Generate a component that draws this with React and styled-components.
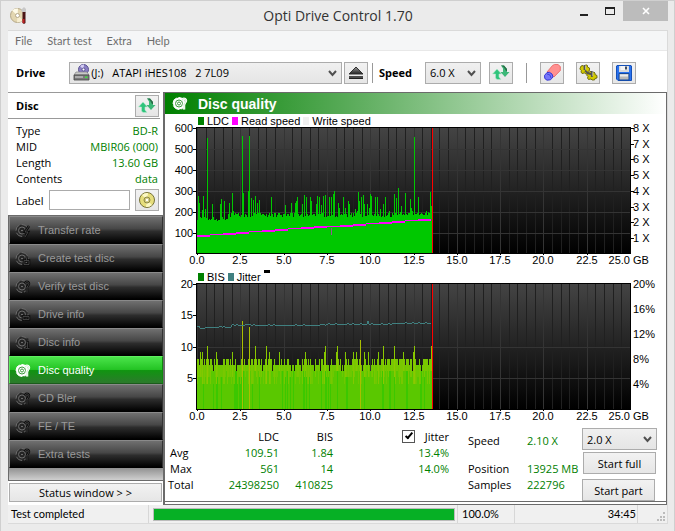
import { useState } from "react";
import styled, { createGlobalStyle } from "styled-components";

const GlobalStyle = createGlobalStyle`
	*, *::before, *::after {
		box-sizing: border-box;
	}

	body {
		margin: 0;
		font-family: "Open Sans", "Noto Sans", sans-serif;
		font-size: 11px;
		color: #000;
	}

	button, input, select {
		font: inherit;
		color: inherit;
	}
`;

const Window = styled.div`
	min-height: 100vh;
	display: flex;
	flex-direction: column;
	padding: 0 6px 7px 7px;
	background: #ebebeb;
	border: 1px solid #cfcfcf;
`;

/* title bar */
const TitleBar = styled.header`
	display: grid;
	grid-template-columns: 1fr auto 1fr;
	height: 29px;

	.appIcon {
		margin: 5px 0 0 2px;
	}

	h1 {
		margin: 0;
		font-size: 14px;
		line-height: 29px;
		font-weight: 400;
		color: #333;
	}
`;

const WindowButtons = styled.div`
	display: flex;
	justify-content: flex-end;
	align-items: flex-start;
`;

const WindowButton = styled.button`
	width: ${(props) => (props.$close ? "45px" : "26px")};
	height: 20px;
	padding: 0;
	border: none;
	background: ${(props) => (props.$close ? "#bcbcbc" : "transparent")};

	svg {
		display: block;
		margin: 0 auto;
	}
`;

const Client = styled.div`
	flex: 1;
	display: flex;
	flex-direction: column;
	background: #fff;
	border: 1px solid #dadada;
	border-width: 1px 1px 1px 0;
`;

const MenuBar = styled.nav`
	display: flex;
	gap: 15px;
	height: 20px;
	padding-left: 7px;
	background: #f5f6f7;
	border-bottom: 1px solid #e8e8e8;

	button {
		padding: 0;
		border: none;
		background: none;
		font-family: Lato, "Open Sans", sans-serif;
		font-size: 11px;
		line-height: 18px;
		color: #6d6d6d;
	}
`;

/* toolbar */
const Toolbar = styled.div`
	display: flex;
	align-items: center;
	height: 41px;
	padding: 2px 31px 0 8px;

	label {
		font-weight: 700;
	}
`;

const Divider = styled.span`
	width: 1px;
	height: 20px;
	margin: ${(props) => props.$margin};
	background: #999;
`;

const ToolButton = styled.button`
	display: flex;
	align-items: center;
	justify-content: center;
	flex: none;
	width: 24px;
	height: 22px;
	margin-left: ${(props) => props.$gap || "0"};
	padding: 0;
	background: linear-gradient(#f2f2f2, #e6e6e6);
	border: 1px solid #acacac;
`;

const SelectBox = styled.div`
	position: relative;
	display: flex;
	align-items: center;
	width: ${(props) => props.$width || "auto"};
	flex: ${(props) => (props.$grow ? "1" : "none")};
	height: 22px;
	margin-left: ${(props) => props.$gap || "0"};
	padding-left: 3px;
	background: linear-gradient(#f0f0f0, #e5e5e5);
	border: 1px solid #acacac;

	select {
		appearance: none;
		flex: 1;
		min-width: 0;
		height: 20px;
		padding: 0 16px 0 1px;
		border: none;
		background: none;
		white-space: pre;
	}

	.chevron {
		position: absolute;
		right: 4px;
		top: 7px;
		pointer-events: none;
	}
`;

/* two columns under the toolbar */
const Main = styled.div`
	flex: 1;
	display: grid;
	grid-template-columns: 155px 1fr;
`;

const Sidebar = styled.aside`
	display: flex;
	flex-direction: column;
`;

const DiscHeader = styled.div`
	display: flex;
	align-items: center;
	justify-content: space-between;
	height: 27px;
	margin-right: 3px;
	padding: 0 1px 0 8px;
	border-top: 1px solid #999;
	border-bottom: 1px solid #999;

	h2 {
		margin: 0;
		font-size: 11px;
	}
`;

const DiscInfo = styled.dl`
	display: grid;
	grid-template-columns: auto 1fr;
	margin: 4px 5px 0 8px;
	line-height: 16px;

	dt,
	dd {
		margin: 0;
	}

	dd {
		text-align: right;
		color: #008000;
	}
`;

const LabelRow = styled.div`
	display: flex;
	align-items: center;
	height: 28px;
	padding: 0 4px 2px 8px;

	label {
		width: 33px;
	}

	input {
		flex: 1;
		min-width: 0;
		height: 20px;
		border: 1px solid #ababab;
		background: #fff;
	}
`;

const NavList = styled.nav`
	flex: 1;
	background: linear-gradient(#8c8c8c, #cfcfcf) bottom / 100% 13px no-repeat;
	border: 1px solid #6b6b6b;
	border-right: none;
`;

const NavButton = styled.button`
	display: flex;
	align-items: center;
	gap: 7px;
	width: 100%;
	height: 28px;
	padding: 0 0 0 5px;
	font-family: "Liberation Sans", Arial, sans-serif;
	font-size: 11px;
	color: ${(props) => (props.$active ? "#fff" : "#999")};
	background: ${(props) =>
		props.$active
			? "linear-gradient(#4be44b, #24c424 48%, #119411 52%, #2c7a2c)"
			: "linear-gradient(#707070, #474747 45%, #2d2d2d 55%, #000)"};
	border: 1px solid ${(props) => (props.$active ? "#5fef5f" : "#8a8a8a")};
	border-bottom-color: ${(props) => (props.$active ? "#1b5c1b" : "#000")};
	border-right-color: ${(props) => (props.$active ? "#0d8a0d" : "#333")};
`;

const PushButton = styled.button`
	height: ${(props) => (props.$low ? "19px" : "22px")};
	margin: ${(props) => props.$margin || "0"};
	padding: 0;
	background: linear-gradient(#f2f2f2, #e6e6e6);
	border: 1px solid #acacac;
	font-size: 11px;
	line-height: 17px;
`;

/* result panel */
const Panel = styled.section`
	display: flex;
	flex-direction: column;
	border: 1px solid #6b6b6b;
	border-left-width: 2px;
	padding-bottom: 2px;
`;

const PanelTitle = styled.div`
	display: flex;
	align-items: center;
	gap: 10px;
	height: 21px;
	padding-left: 7px;
	background: linear-gradient(to right, #008000, #55a955 35%, #fff);

	h2 {
		margin: 0;
		font-family: "Liberation Sans", Arial, sans-serif;
		font-size: 14px;
		color: #fff;
	}
`;

const Legend = styled.div`
	display: flex;
	align-items: center;
	gap: 3px;
	height: 13px;
	padding-left: 33px;
	font-family: "Liberation Sans", Arial, sans-serif;
	font-size: 11px;

	span {
		display: flex;
		align-items: center;
		gap: 3px;
	}
`;

const Swatch = styled.i`
	width: 6px;
	height: 8px;
	background: ${(props) => props.$color};
`;

const Mark = styled.i`
	align-self: flex-start;
	width: 6px;
	height: 3px;
	background: #000;
`;

const ChartSvg = styled.svg`
	display: block;
	width: 100%;
	overflow: visible;
	font-family: "Liberation Sans", Arial, sans-serif;
	font-size: 11px;
`;

const Results = styled.div`
	flex: 1;
	display: flex;
	padding: 5px 9px 0 3px;
	border-bottom: 1px solid #6b6b6b;
`;

const ResultTable = styled.table`
	width: 281px;
	border-collapse: collapse;
	table-layout: fixed;
	align-self: flex-start;

	th,
	td {
		height: 16px;
		padding: 0;
		font-weight: 400;
		text-align: right;
		line-height: 16px;
	}

	thead th {
		height: 17px;
	}

	tbody th {
		text-align: left;
		padding-left: 2px;
	}

	tbody tr:last-child th {
		padding-left: 0;
	}

	td {
		color: #008000;
	}
`;

const CheckLabel = styled.label`
	display: flex;
	align-items: center;
	justify-content: flex-end;
	gap: 10px;

	input {
		appearance: none;
		width: 13px;
		height: 13px;
		margin: 0;
		border: 1px solid #555;
		background: #fff;
		color: #000;
	}

	input:checked::before {
		content: "";
		display: block;
		width: 4px;
		height: 8px;
		margin: 0 0 0 4px;
		border: solid #000;
		border-width: 0 2px 2px 0;
		transform: rotate(40deg);
	}
`;

const Readings = styled.dl`
	flex: 1;
	display: grid;
	grid-template-columns: 59px 1fr;
	grid-template-rows: 28px 16px 16px;
	align-content: start;
	margin: 5px 0 0 19px;
	line-height: 16px;
	white-space: nowrap;

	dt,
	dd {
		margin: 0;
	}

	dd {
		color: #008000;
	}
`;

const Actions = styled.div`
	display: flex;
	flex-direction: column;
	width: 75px;
`;

/* status bar */
const StatusBar = styled.footer`
	display: flex;
	align-items: center;
	height: 18px;
	background: #f0f0f0;
	font-family: Lato, "Open Sans", sans-serif;
	font-size: 11px;

	span {
		line-height: 18px;
		border-right: 1px solid #d7d7d7;
	}

	.message {
		width: 141px;
		padding-left: 3px;
	}

	progress {
		appearance: none;
		flex: 1;
		min-width: 0;
		height: 13px;
		margin: 0 2px 0 4px;
		border: 1px solid #bcbcbc;
	}

	progress::-webkit-progress-bar {
		background: #e6e6e6;
	}

	progress::-webkit-progress-value {
		background: #06b025;
	}

	.percent {
		width: 58px;
		padding-left: 4px;
		border-left: 1px solid #d7d7d7;
	}

	.time {
		width: 123px;
		padding-right: 1px;
		text-align: right;
	}

	svg {
		margin: 5px 1px 0 18px;
	}
`;

/* ---------- icons ---------- */

function Chevron() {
	return (
		<svg className="chevron" width="9" height="7" viewBox="0 0 9 7">
			<path d="M1 1l3.5 4L8 1" fill="none" stroke="#505050" strokeWidth="2" />
		</svg>
	);
}

function RefreshIcon() {
	return (
		<svg width="18" height="16" viewBox="0 0 18 16">
			<path
				d="M5 4l4.500 5H7v3l2 2.500H5L3.500 13V9H.5z"
				fill="#2fc47c"
				stroke="#b9e8cf"
				strokeWidth=".6"
			/>
			<path d="M13 12l4.500-5H15V4l-3-3.500H9l2 3V7H8.500z" fill="#3db878" />
			<path d="M9 .5h3L15 4v2h-1L12 2.500z" fill="#2b6d48" />
		</svg>
	);
}

function EjectIcon() {
	return (
		<svg width="16" height="14" viewBox="0 0 16 14">
			<defs>
				<linearGradient id="eject" x2="0" y2="1">
					<stop offset="0" stopColor="#999" />
					<stop offset="1" stopColor="#222" />
				</linearGradient>
			</defs>
			<path d="M8 1l7 7H1z" fill="url(#eject)" stroke="#333" />
			<path d="M1 10h14v3H1z" fill="#222" />
			<path d="M1 11h14" stroke="#777" />
		</svg>
	);
}

function EraserIcon() {
	return (
		<svg width="18" height="17" viewBox="0 0 18 17">
			<path
				d="M4 8L9.500 1.500l2-1H15l2.300 2v4L11 13z"
				fill="#ff9090"
				stroke="#ea6060"
				strokeWidth=".8"
			/>
			<path
				d="M4 8.500L1.500 11.500l.3 3L4 16.200l3.500-.4L10 13 9 10 6.500 8.300z"
				fill="#7676fa"
				stroke="#2a2ad0"
				strokeWidth=".9"
			/>
			<path d="M4 10l3 1 1 3" fill="none" stroke="#3a3ad8" strokeWidth=".8" />
		</svg>
	);
}

function GearsIcon() {
	return (
		<svg width="19" height="17" viewBox="0 0 19 17">
			<g fill="#d2ca00" stroke="#5c5800" strokeWidth=".8">
				<path d="M2 2l2-.5 1 1L7 .8l1.500.7V3l2 1v2.500l-1.500 1L9 9.500l-2 .5-1.500-1L3 9.500 2 8l.3-1.500L.8 5z" />
				<path d="M10 8l2-.5 1 1.200L15 8l1 1v1.500l2 1V14l-2 .5-.5 1.500H13l-1-1-2.500.5-1-1.500.5-1.500L7.500 11z" />
			</g>
			<path
				d="M5.500 1v5M12.800 7v6M6 6.500l3 3 3 .5"
				fill="none"
				stroke="#555"
				strokeWidth="1.800"
			/>
			<path d="M6.500 1.500v4M13.800 8v4" stroke="#bbb" strokeWidth=".8" />
		</svg>
	);
}

function SaveIcon() {
	return (
		<svg width="16" height="16" viewBox="0 0 16 16">
			<path d="M1 .5h14l.5.500v14.500H2L.5 14V1z" fill="#2a72ee" stroke="#1550b8" />
			<path d="M3 1h10v6H3z" fill="#d8dadd" />
			<path d="M3 8.500h10V15H3z" fill="#b8b8b8" stroke="#14489c" />
			<path d="M4 9.500h8v2H4z" fill="#ececec" />
			<path d="M4.500 1h7v4h-7z" fill="#f4f4f4" />
			<path d="M9 1.500h2v3H9z" fill="#3c4b60" />
		</svg>
	);
}

function AppIcon() {
	return (
		<svg className="appIcon" width="17" height="19" viewBox="0 0 17 19">
			<circle cx="7.500" cy="9.500" r="7" fill="#e3d6b0" stroke="#b5a888" />
			<path d="M7.500 9.500L2 4.500A7 7 0 0 1 8 2.500z" fill="#fffbe8" />
			<path d="M7.500 9.500L13 14a7 7 0 0 1-6 2.300z" fill="#f7eed0" />
			<circle cx="7.500" cy="9.500" r="2" fill="#fff" stroke="#b5a888" />
			<path d="M11 4l3-3 2 2v4h-3z" fill="#c8c8c8" />
			<path d="M12.500 6h3v11l-1.500 1-1.500-1z" fill="#4b1515" />
			<path d="M12.500 13h2v4h-2z" fill="#c02020" />
		</svg>
	);
}

function DriveIcon() {
	return (
		<svg width="17" height="17" viewBox="0 0 17 17">
			<circle cx="10.500" cy="5.500" r="5" fill="#8a7fc4" stroke="#5a5290" />
			<path d="M10.500 5.500L7 2a5 5 0 0 1 4-1.500z" fill="#d6cff5" />
			<circle cx="10.500" cy="5.500" r="1.500" fill="#fff" stroke="#5a5290" />
			<path d="M3 8h11l2 3H1z" fill="#c9c9c9" stroke="#777" strokeWidth=".6" />
			<path d="M1 11h15v5H1z" fill="#7b7b7b" stroke="#444" strokeWidth=".8" />
			<path d="M2 13h8" stroke="#ddd" />
			<path d="M12 12.500h2.500v1.500H12z" fill="#3fe03f" />
		</svg>
	);
}

function DiscIcon() {
	return (
		<svg width="18" height="18" viewBox="0 0 18 18">
			<circle cx="9" cy="9" r="7.500" fill="#e6de7c" stroke="#77733a" />
			<path d="M9 9L4 4a7 7 0 0 1 6-2z" fill="#fbf8c4" />
			<path d="M9 9l5 5a7 7 0 0 1-6 2z" fill="#fbf8c4" />
			<circle cx="9" cy="9" r="3" fill="#d3cc80" stroke="#8d8848" />
			<circle cx="9" cy="9" r="1.200" fill="#fff" />
		</svg>
	);
}

const badges = {
	transfer: "M14 3l-4 6h3l-3 5",
	create: "M9 9.500h5v4H9zM11.500 6.500v3",
	verify: "M10 4.500a2 2 0 1 1 3 2l-1 2M12 8v5.500",
	drive: "M8 9.500h6v3H8z",
	info: "M12 3.500v1.500M11 7h1.500v6M10.500 13.500h4",
};

function NavIcon({ badge, active }) {
	const disc = active ? "#fff" : "#6c6c6c";
	const dark = active ? "#3a9a3a" : "#161616";

	return (
		<svg width="16" height="15" viewBox="0 0 16 15">
			<circle cx="7" cy="7.500" r="6" fill={active ? "#fff" : "#282828"} />
			<circle
				cx="7"
				cy="7.500"
				r="6"
				fill="none"
				stroke={disc}
				strokeDasharray="7 2"
			/>
			<circle cx="7" cy="7.500" r="3.500" fill="none" stroke={active ? dark : disc} />
			<circle cx="7" cy="7.500" r="1.500" fill={disc} stroke={dark} />
			<path
				d={badges[badge]}
				fill="none"
				stroke={active ? "#fff" : "#0b0b0b"}
				strokeWidth="2.500"
			/>
			<path
				d={badges[badge]}
				fill="none"
				stroke={active ? "#bfe6bf" : "#555"}
				strokeWidth=".7"
			/>
		</svg>
	);
}

/* ---------- chart data ---------- */

const PLOT_LEFT = 32;
const PLOT_RIGHT = 465;
const PLOT_HEIGHT = 126;
const END = 235; // column where the test stopped
const PER_GB = (PLOT_RIGHT - PLOT_LEFT) / 25;

// column, height
const ldcPeaks = new Map([
	[1, 57], [2, 50], [5, 43], [6, 57], [8, 44], [10, 115], [15, 49], [23, 49],
	[24, 54], [27, 52], [32, 50], [35, 60], [36, 42], [45, 117], [46, 60],
	[51, 62], [52, 117], [54, 55], [56, 53], [58, 57], [60, 50], [62, 53],
	[74, 56], [81, 40], [88, 48], [94, 50], [98, 50], [99, 52], [100, 56],
	[105, 49], [107, 58], [109, 56], [113, 56], [114, 52], [119, 49], [120, 57],
	[122, 56], [124, 48], [126, 57], [128, 58], [132, 56], [134, 56], [136, 59],
	[137, 62], [141, 50], [142, 45], [146, 56], [148, 45], [151, 52], [152, 49],
	[156, 40], [158, 44], [160, 42], [161, 61], [162, 52], [164, 56], [166, 58],
	[167, 49], [170, 49], [172, 45], [173, 59], [174, 57], [178, 56], [180, 56],
	[183, 44], [186, 49], [188, 56], [192, 42], [197, 59], [199, 55], [201, 65],
	[204, 47], [208, 60], [213, 54], [214, 45], [217, 116], [221, 56], [233, 61],
	[234, 47],
]);

const bisPeaks = new Map([
	[10, 10], [45, 14], [52, 13], [58, 10], [69, 10], [128, 10], [140, 10],
	[163, 11], [186, 10], [197, 10], [217, 10], [234, 10],
]);

function noise(n) {
	const v = Math.sin(n * 12.9898 + 4.1) * 43758.5453;
	return v - Math.floor(v);
}

function ldcHeight(i) {
	const base = i < 31 ? 32 : i < 200 ? 36 : 38;
	return ldcPeaks.get(i) || base + Math.floor(noise(i) * 5);
}

function bisValue(i) {
	if (bisPeaks.has(i)) return bisPeaks.get(i);
	const r = noise(i + 90);
	if (r > 0.9) return 9;
	if (r > 0.48) return 8;
	return r < 0.06 ? 6 : 7;
}

function bisColor(value) {
	if (value > 10) return "#aabe00";
	return ["#5ac800", "#6ec800", "#78c800", "#82c800", "#8cc800"][value - 6];
}

const columns = Array.from({ length: END }, (_, i) => i);

const jitterPoints = columns
	.map((i) => {
		let y = i < 3 ? 42 : i < 12 ? 44 : i < 35 ? 43 : i < 130 ? 41 : 40;
		if (i > 195) y = 39;
		if (noise(i + 500) > 0.8) y -= 1;
		if (i === 171) y = 37;
		return `${PLOT_LEFT + i},${y + 1}`;
	})
	.join(" ");

/* ---------- charts ---------- */

function PlotBackground({ id, rows }) {
	return (
		<>
			<defs>
				<linearGradient id={id} x2="0" y2="1">
					<stop offset="0" stopColor="#444" />
					<stop offset="1" stopColor="#000" />
				</linearGradient>
			</defs>
			<rect x="31" y="0" width="435" height="127" fill="#000" />
			<rect x="32" y="1" width="433" height="125" fill={`url(#${id})`} />
			{Array.from({ length: 50 }, (_, i) => (
				<rect
					key={i}
					x={Math.round(PLOT_LEFT + i * 0.5 * PER_GB)}
					y="1"
					width="1"
					height="125"
					fill={i % 5 === 0 ? "#343434" : "#202020"}
				/>
			))}
			{rows.map((y) => (
				<rect key={y} x="32" y={y} width="433" height="1" fill="#343434" />
			))}
		</>
	);
}

function XAxis() {
	return (
		<>
			{[0, 2.5, 5, 7.5, 10, 12.5, 15, 17.5, 20, 22.5].map((gb) => (
				<g key={gb}>
					<rect x={Math.round(PLOT_LEFT + gb * PER_GB)} y="126" width="1" height="2" />
					<text x={Math.round(PLOT_LEFT + gb * PER_GB)} y="137" textAnchor="middle">
						{gb.toFixed(1)}
					</text>
				</g>
			))}
			<text x="465" y="137" textAnchor="end">
				25.0
			</text>
			<text x="468" y="137">
				GB
			</text>
		</>
	);
}

function LdcChart() {
	return (
		<ChartSvg viewBox="0 0 501 143" shapeRendering="crispEdges" role="img" aria-label="LDC">
			<PlotBackground id="ldcBack" rows={[22, 43, 64, 85, 106]} />
			{columns.map((i) => (
				<rect
					key={i}
					x={PLOT_LEFT + i}
					y={PLOT_HEIGHT - ldcHeight(i)}
					width="1"
					height={ldcHeight(i)}
					fill="#00c800"
				/>
			))}
			{/* read speed rises in steps */}
			{Array.from({ length: 18 }, (_, i) => (
				<rect
					key={i}
					x={PLOT_LEFT + i * 13}
					y={Math.round(108 - i * 0.95)}
					width="13"
					height={i % 3 === 1 ? 1 : 2}
					fill="#f0f"
				/>
			))}
			<rect x="166" y="101" width="1" height="7" fill="#f0f" opacity="0.6" />
			<rect x="267" y="1" width="1" height="125" fill="#f00" />
			{[600, 500, 400, 300, 200, 100].map((value, i) => (
				<g key={value}>
					<rect x="28" y={1 + i * 21} width="4" height="1" />
					<text x="28" y={5 + i * 21} textAnchor="end">
						{value}
					</text>
				</g>
			))}
			{[8, 7, 6, 5, 4, 3, 2, 1].map((value, i) => (
				<g key={value}>
					<rect x="466" y={Math.round(1 + i * 15.7)} width="3" height="1" />
					<text x="468" y={Math.round(5 + i * 15.7)}>
						{value} X
					</text>
				</g>
			))}
			<XAxis />
		</ChartSvg>
	);
}

function BisChart() {
	return (
		<ChartSvg viewBox="0 0 501 140" shapeRendering="crispEdges" role="img" aria-label="BIS">
			<PlotBackground id="bisBack" rows={[64, 95]} />
			{columns.map((i) => {
				const value = bisValue(i);
				const height = Math.round(value * 6.3);
				const inner = Math.round((4 + Math.floor(noise(i + 200) * 3)) * 6.3);
				return (
					<g key={i}>
						<rect
							x={PLOT_LEFT + i}
							y={PLOT_HEIGHT - height}
							width="1"
							height={height}
							fill={bisColor(value)}
						/>
						{value < 11 && (
							<rect
								x={PLOT_LEFT + i}
								y={PLOT_HEIGHT - inner}
								width="1"
								height={inner}
								fill={noise(i + 300) > 0.8 ? "#3cc800" : "#5ac800"}
							/>
						)}
					</g>
				);
			})}
			<polyline points={jitterPoints} fill="none" stroke="#408080" />
			<rect x="267" y="1" width="1" height="125" fill="#f00" />
			{[20, 15, 10, 5].map((value, i) => (
				<g key={value}>
					<rect x="28" y={Math.round(1 + i * 31.4)} width="4" height="1" />
					<text x="28" y={Math.round(5 + i * 31.4)} textAnchor="end">
						{value}
					</text>
				</g>
			))}
			{[20, 16, 12, 8, 4].map((value, i) => (
				<text key={value} x="468" y={5 + i * 25}>
					{value}%
				</text>
			))}
			<XAxis />
		</ChartSvg>
	);
}

const tests = [
	{ name: "Transfer rate", badge: "transfer" },
	{ name: "Create test disc", badge: "create" },
	{ name: "Verify test disc", badge: "verify" },
	{ name: "Drive info", badge: "drive" },
	{ name: "Disc info", badge: "info" },
	{ name: "Disc quality", badge: "verify" },
	{ name: "CD Bler", badge: "verify" },
	{ name: "FE / TE", badge: "verify" },
	{ name: "Extra tests", badge: "verify" },
];

function App() {
	const [activeTest, setActiveTest] = useState("Disc quality");
	const [discLabel, setDiscLabel] = useState("");
	const [showJitter, setShowJitter] = useState(true);

	return (
		<>
			<GlobalStyle />
			<Window>
				<TitleBar>
					<AppIcon />
					<h1>Opti Drive Control 1.70</h1>
					<WindowButtons>
						<WindowButton aria-label="Minimize">
							<svg width="9" height="10" viewBox="0 0 9 10">
								<path d="M0 8h8v2H0z" fill="#222" />
							</svg>
						</WindowButton>
						<WindowButton aria-label="Maximize">
							<svg width="10" height="8" viewBox="0 0 10 8">
								<path d="M0 0h10v8H0zM1 2v5h8V2z" fill="#222" fillRule="evenodd" />
							</svg>
						</WindowButton>
						<WindowButton $close aria-label="Close">
							<svg width="8" height="8" viewBox="0 0 8 8">
								<path d="M1 1l6 6M7 1L1 7" stroke="#fff" strokeWidth="1.600" />
							</svg>
						</WindowButton>
					</WindowButtons>
				</TitleBar>

				<Client>
					<MenuBar>
						<button>File</button>
						<button>Start test</button>
						<button>Extra</button>
						<button>Help</button>
					</MenuBar>

					<Toolbar>
						<label htmlFor="drive">Drive</label>
						<SelectBox $grow $gap="24px">
							<DriveIcon />
							<select id="drive">
								<option>{"(J:)\u00a0\u00a0 ATAPI iHES108\u00a0\u00a0 2 7L09"}</option>
							</select>
							<Chevron />
						</SelectBox>
						<ToolButton $gap="2px" aria-label="Eject">
							<EjectIcon />
						</ToolButton>
						<Divider $margin="0 6px 0 4px" />
						<label htmlFor="speed">Speed</label>
						<SelectBox $width="56px" $gap="13px">
							<select id="speed">
								<option>6.0 X</option>
							</select>
							<Chevron />
						</SelectBox>
						<ToolButton $gap="8px" aria-label="Refresh drives">
							<RefreshIcon />
						</ToolButton>
						<Divider $margin="0 1px 0 13px" />
						<ToolButton $gap="12px" aria-label="Erase disc">
							<EraserIcon />
						</ToolButton>
						<ToolButton $gap="12px" aria-label="Options">
							<GearsIcon />
						</ToolButton>
						<ToolButton $gap="12px" aria-label="Save">
							<SaveIcon />
						</ToolButton>
					</Toolbar>

					<Main>
						<Sidebar>
							<DiscHeader>
								<h2>Disc</h2>
								<ToolButton aria-label="Refresh disc">
									<RefreshIcon />
								</ToolButton>
							</DiscHeader>
							<DiscInfo>
								<dt>Type</dt>
								<dd>BD-R</dd>
								<dt>MID</dt>
								<dd>MBIR06 (000)</dd>
								<dt>Length</dt>
								<dd>13.60 GB</dd>
								<dt>Contents</dt>
								<dd>data</dd>
							</DiscInfo>
							<LabelRow>
								<label htmlFor="discLabel">Label</label>
								<input
									type="text"
									id="discLabel"
									value={discLabel}
									onChange={(e) => setDiscLabel(e.target.value)}
								/>
								<ToolButton $gap="5px" aria-label="Read label">
									<DiscIcon />
								</ToolButton>
							</LabelRow>
							<NavList>
								{tests.map((test) => (
									<NavButton
										key={test.name}
										$active={test.name === activeTest}
										onClick={() => setActiveTest(test.name)}
									>
										<NavIcon badge={test.badge} active={test.name === activeTest} />
										{test.name}
									</NavButton>
								))}
							</NavList>
							<PushButton $low $margin="2px 1px 3px">
								{"Status window > >"}
							</PushButton>
						</Sidebar>

						<Panel>
							<PanelTitle>
								<NavIcon badge="verify" active />
								<h2>Disc quality</h2>
							</PanelTitle>
							<Legend>
								<span>
									<Swatch $color="#008000" />
									LDC
								</span>
								<span>
									<Swatch $color="#f0f" />
									Read speed
								</span>
								<span>
									<Swatch $color="#f0f0f0" />
									Write speed
								</span>
							</Legend>
							<LdcChart />
							<Legend>
								<span>
									<Swatch $color="#008000" />
									BIS
								</span>
								<span>
									<Swatch $color="#408080" />
									Jitter
								</span>
								<Mark />
							</Legend>
							<BisChart />

							<Results>
								<ResultTable>
									<colgroup>
										<col width="45" />
										<col width="66" />
										<col width="54" />
										<col width="116" />
									</colgroup>
									<thead>
										<tr>
											<td />
											<th>LDC</th>
											<th>BIS</th>
											<th>
												<CheckLabel>
													<input
														type="checkbox"
														checked={showJitter}
														onChange={(e) => setShowJitter(e.target.checked)}
													/>
													Jitter
												</CheckLabel>
											</th>
										</tr>
									</thead>
									<tbody>
										<tr>
											<th>Avg</th>
											<td>109.51</td>
											<td>1.84</td>
											<td>13.4%</td>
										</tr>
										<tr>
											<th>Max</th>
											<td>561</td>
											<td>14</td>
											<td>14.0%</td>
										</tr>
										<tr>
											<th>Total</th>
											<td>24398250</td>
											<td>410825</td>
											<td />
										</tr>
									</tbody>
								</ResultTable>
								<Readings>
									<dt>Speed</dt>
									<dd>2.10 X</dd>
									<dt>Position</dt>
									<dd>13925 MB</dd>
									<dt>Samples</dt>
									<dd>222796</dd>
								</Readings>
								<Actions>
									<SelectBox>
										<select aria-label="Test speed">
											<option>2.0 X</option>
										</select>
										<Chevron />
									</SelectBox>
									<PushButton $margin="2px 1px 0">Start full</PushButton>
									<PushButton $margin="5px 2px 0 0">Start part</PushButton>
								</Actions>
							</Results>
						</Panel>
					</Main>

					<StatusBar>
						<span className="message">Test completed</span>
						<progress value="100" max="100" aria-label="Test progress" />
						<span className="percent">100.0%</span>
						<span className="time">34:45</span>
						<svg width="10" height="10" viewBox="0 0 10 10">
							<path
								d="M7 0h2v2H7zM7 4h2v2H7zM4 4h2v2H4zM7 7h2v2H7zM4 7h2v2H4zM1 7h2v2H1z"
								fill="#bbb"
							/>
						</svg>
					</StatusBar>
				</Client>
			</Window>
		</>
	);
}

export default App;
